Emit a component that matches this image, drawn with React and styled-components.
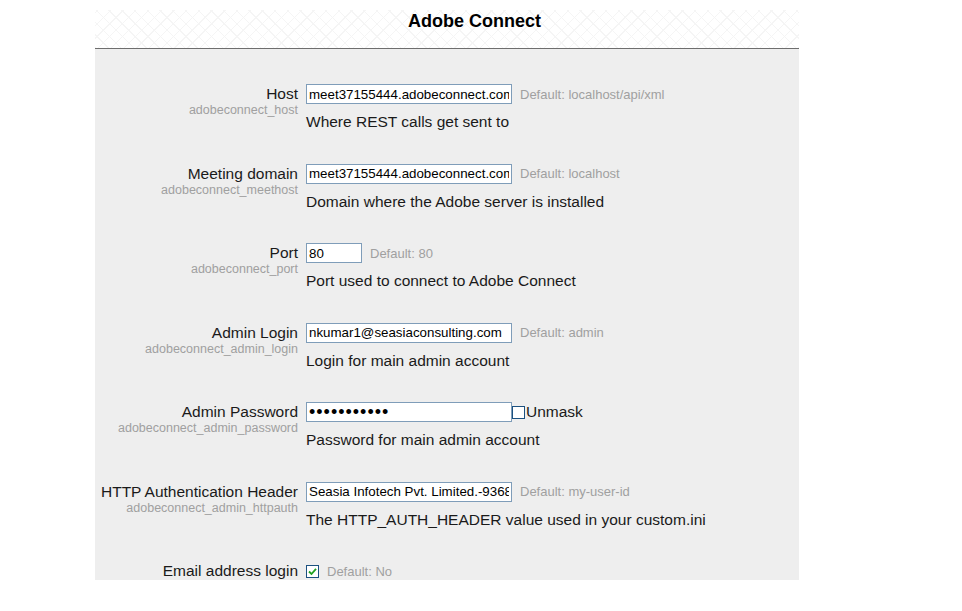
import styled, { createGlobalStyle } from "styled-components";

const GlobalStyle = createGlobalStyle`
  html, body {
    margin: 0;
    padding: 0;
    background: #ffffff;
  }
  body {
    font-family: "Liberation Sans", Arial, sans-serif;
    color: #1a1a1a;
  }
`;

const settings = [
  {
    label: "Host",
    name: "adobeconnect_host",
    type: "text",
    value: "meet37155444.adobeconnect.com",
    note: "Default: localhost/api/xml",
    desc: "Where REST calls get sent to",
  },
  {
    label: "Meeting domain",
    name: "adobeconnect_meethost",
    type: "text",
    value: "meet37155444.adobeconnect.com",
    note: "Default: localhost",
    desc: "Domain where the Adobe server is installed",
  },
  {
    label: "Port",
    name: "adobeconnect_port",
    type: "text",
    small: true,
    value: "80",
    note: "Default: 80",
    desc: "Port used to connect to Adobe Connect",
  },
  {
    label: "Admin Login",
    name: "adobeconnect_admin_login",
    type: "text",
    value: "nkumar1@seasiaconsulting.com",
    note: "Default: admin",
    desc: "Login for main admin account",
  },
  {
    label: "Admin Password",
    name: "adobeconnect_admin_password",
    type: "password",
    value: "xxxxxxxxxxx",
    desc: "Password for main admin account",
  },
  {
    label: "HTTP Authentication Header",
    name: "adobeconnect_admin_httpauth",
    type: "text",
    value: "Seasia Infotech Pvt. Limited.-93683",
    note: "Default: my-user-id",
    desc: "The HTTP_AUTH_HEADER value used in your custom.ini",
  },
  {
    label: "Email address login",
    type: "checkbox",
    checked: true,
    note: "Default: No",
  },
];

function Checkbox({ checked }) {
  return (
    <CheckBox>
      {checked && (
        <svg width="9" height="9" viewBox="0 0 9 9">
          <path d="M1 4.5 L3.5 7 L8 1.8" fill="none" stroke="#21a121" strokeWidth="1.8" />
        </svg>
      )}
    </CheckBox>
  );
}

export default function App() {
  return (
    <>
      <GlobalStyle />
      <Page>
        <Panel>
          <Header>
            <Title>Adobe Connect</Title>
          </Header>
          <Body>
            {settings.map((s) => (
              <Row key={s.label}>
                <LabelCol>
                  <Label>{s.label}</Label>
                  {s.name && <Key>{s.name}</Key>}
                </LabelCol>
                <FieldCol>
                  <Control>
                    {s.type === "checkbox" ? (
                      <Checkbox checked={s.checked} />
                    ) : (
                      <TextInput
                        type={s.type}
                        $small={s.small}
                        $password={s.type === "password"}
                        defaultValue={s.value}
                        readOnly
                      />
                    )}
                    {s.type === "password" && (
                      <Unmask>
                        <Checkbox />
                        Unmask
                      </Unmask>
                    )}
                    {s.note && <Note>{s.note}</Note>}
                  </Control>
                  {s.desc && <Desc>{s.desc}</Desc>}
                </FieldCol>
              </Row>
            ))}
          </Body>
        </Panel>
      </Page>
    </>
  );
}

const Page = styled.div`
  padding-left: 95px;
`;

const Panel = styled.div`
  width: 704px;
`;

const Header = styled.div`
  margin-top: 10px;
  height: 38px;
  border-bottom: 1px solid #6e6e6e;
  padding-left: 55px;
  display: flex;
  justify-content: center;
  background-color: #ffffff;
  background-image:
    repeating-linear-gradient(45deg, #f5f5f5 0 1px, transparent 1px 9px),
    repeating-linear-gradient(-45deg, #f5f5f5 0 1px, transparent 1px 9px);
`;

const Title = styled.h1`
  margin: 0;
  font-size: 18px;
  line-height: 22px;
  font-weight: 700;
  color: #000;
`;

const Body = styled.div`
  background: #eeeeee;
  height: 531px;
  overflow: hidden;
  padding-top: 35px;
  box-sizing: border-box;
`;

const Row = styled.div`
  display: grid;
  grid-template-columns: 203px 1fr;
  column-gap: 8px;
  padding-bottom: 31.5px;
`;

const LabelCol = styled.div`
  text-align: right;
`;

const Label = styled.div`
  font-size: 15.5px;
  line-height: 20px;
  white-space: nowrap;
`;

const Key = styled.div`
  font-size: 12.5px;
  line-height: 13px;
  color: #a0a0a0;
`;

const FieldCol = styled.div`
  display: flex;
  flex-direction: column;
  gap: 8px;
`;

const Control = styled.div`
  display: flex;
  align-items: center;
  height: 20px;
`;

const TextInput = styled.input`
  box-sizing: border-box;
  width: ${(p) => (p.$small ? "56px" : "206px")};
  height: 20px;
  margin: 0;
  padding: 0 2px;
  border: 1px solid #7f9db9;
  background: #fff;
  font-family: "Liberation Sans", Arial, sans-serif;
  font-size: ${(p) => (p.$password ? "18px" : "13.33px")};
  letter-spacing: ${(p) => (p.$password ? "1px" : "normal")};
  color: #000;
  outline: none;
`;

const CheckBox = styled.span`
  box-sizing: border-box;
  width: 13px;
  height: 13px;
  border: 1px solid #1c5180;
  background: #fff;
  display: inline-flex;
  align-items: center;
  justify-content: center;
  flex-shrink: 0;
`;

const Unmask = styled.span`
  display: inline-flex;
  align-items: center;
  gap: 1px;
  font-size: 15.5px;
`;

const Note = styled.span`
  margin-left: 8px;
  font-size: 13px;
  color: #a0a0a0;
  white-space: nowrap;
`;

const Desc = styled.div`
  font-size: 15.5px;
  line-height: 20px;
  white-space: nowrap;
`;
